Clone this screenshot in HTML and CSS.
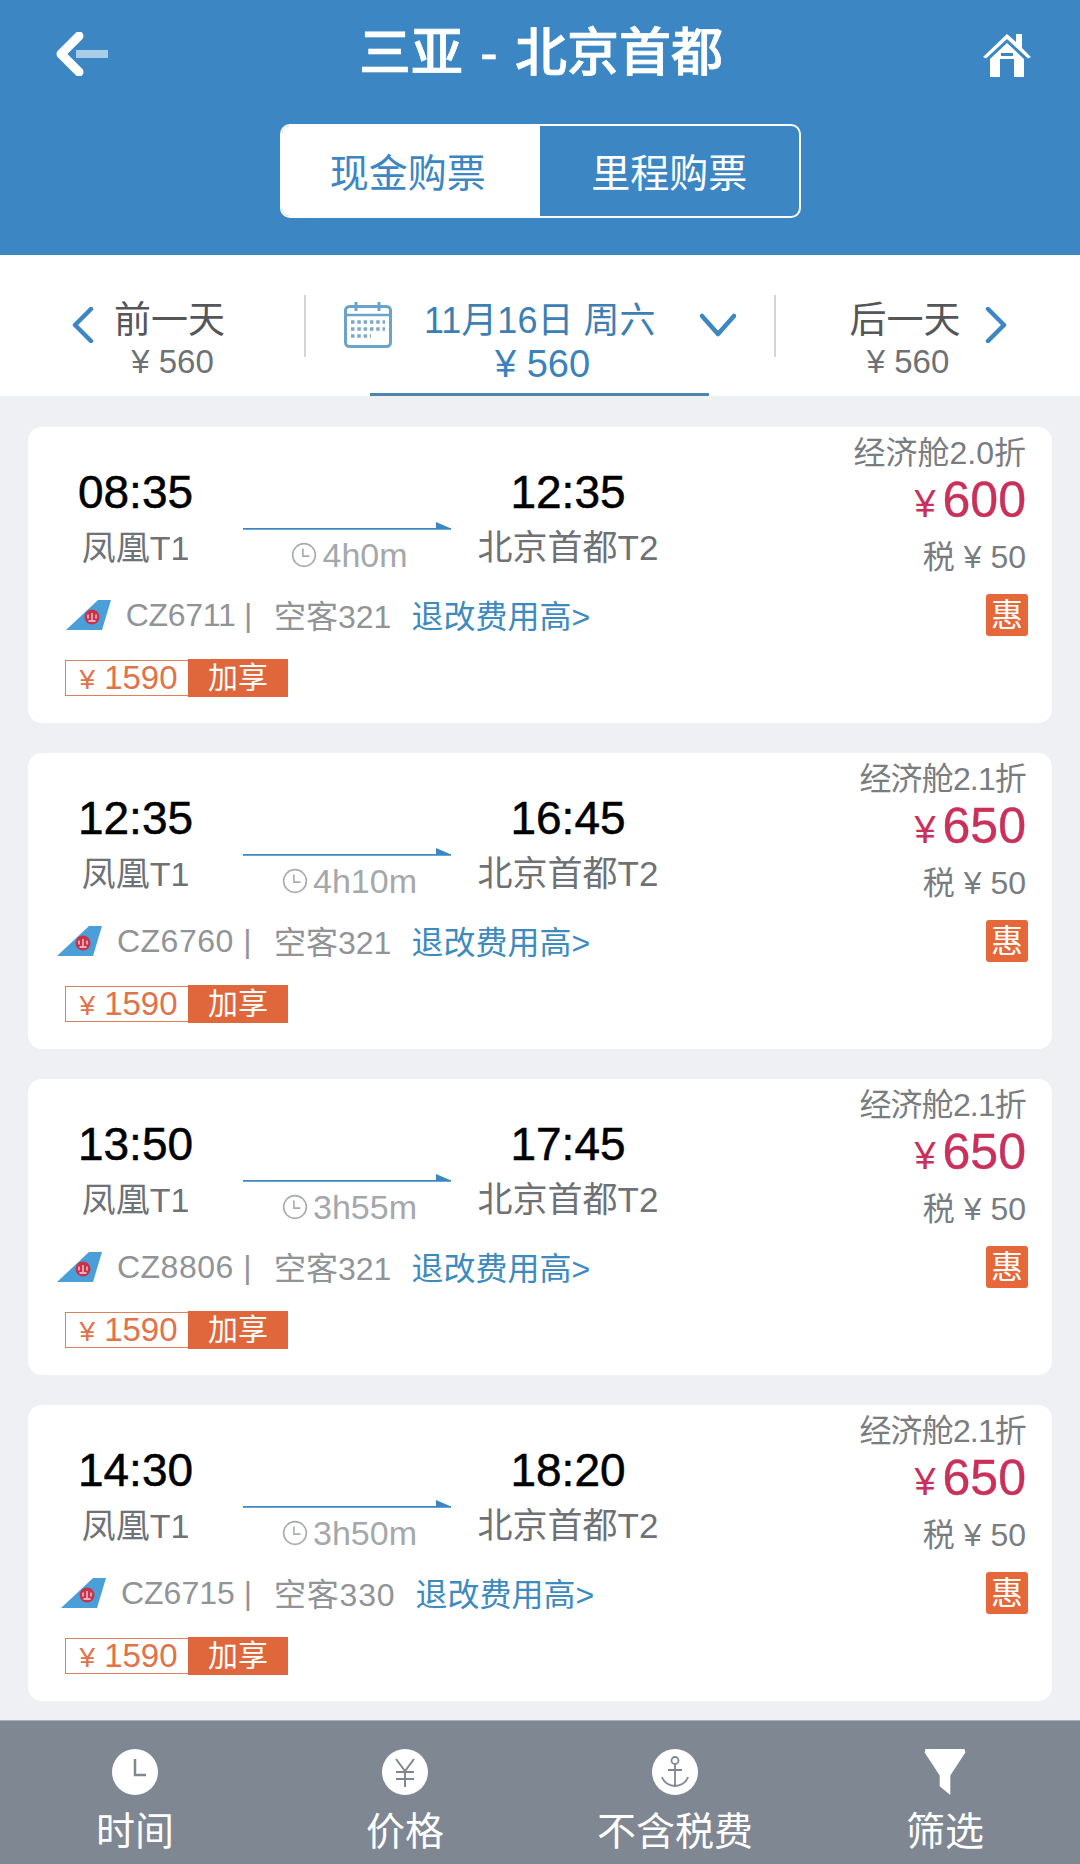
FILE: index.html
```html
<!DOCTYPE html>
<html lang="zh-CN">
<head>
<meta charset="utf-8">
<title>三亚 - 北京首都</title>
<link rel="stylesheet" href="styles.css">
</head>
<body>
<svg class="defs" width="0" height="0" aria-hidden="true">
  <symbol id="tail" viewBox="0 0 46 32">
    <path d="M1 31 33 1h13l-9 30z" fill="#4a9fd8"/>
    <circle cx="27" cy="18" r="7.500" fill="#c8324a"/>
    <path d="M23 15.500v4M27 14v7M31 15.500v4M23.500 22h7" stroke="#f3d7dc" stroke-width="1.300" fill="none"/>
  </symbol>
  <symbol id="clock" viewBox="0 0 24 24">
    <circle cx="12" cy="12" r="10.500" fill="none" stroke="#a9acaf" stroke-width="1.500"/>
    <path d="M11 6v7h6" fill="none" stroke="#a9acaf" stroke-width="1.500"/>
  </symbol>
  <symbol id="route" viewBox="0 0 208 8" preserveAspectRatio="none">
    <path d="M0 6h208v1.800H0z" fill="#3d86c4"/>
    <path d="M193 0l15 6.500h-15z" fill="#3d86c4"/>
  </symbol>
</svg>
<main class="page">
  <header class="header">
    <div class="title-row">
      <svg class="back" viewBox="0 0 52 44" aria-hidden="true">
        <path d="M20 22h32" stroke="#a8cde6" stroke-width="8" fill="none"/>
        <path d="M23 4 5 22l18 18" stroke="#fff" stroke-width="9" stroke-linecap="round" stroke-linejoin="round" fill="none"/>
      </svg>
      <h1 class="title">三亚 - 北京首都</h1>
      <svg class="home" viewBox="0 0 50 46" aria-hidden="true">
        <path d="M1 25 25 2l9 8V2h6v14l9 9-3 1.500L25 7 4 26.500z" fill="#fff"/>
        <path d="M8 27 25 11l17 16v18H32V27H18v18H8z" fill="#fff"/>
        <path d="M19 21h12v3H19z" fill="#3d86c4"/>
      </svg>
    </div>
    <div class="toggle">
      <div class="toggle-item is-active">现金购票</div>
      <div class="toggle-item">里程购票</div>
    </div>
  </header>

  <nav class="datebar">
    <div class="day-side day-prev">
      <svg class="chev" viewBox="0 0 22 36" aria-hidden="true"><path d="M19 2 3 18l16 16" /></svg>
      <div class="day-text"><div class="day-name">前一天</div><div class="day-price">¥ 560</div></div>
    </div>
    <div class="day-current">
      <svg class="cal" viewBox="0 0 48 46" aria-hidden="true">
        <rect x="1.500" y="4.500" width="45" height="40" rx="4" fill="none" stroke="#6ca3cb" stroke-width="3"/>
        <path d="M2 13h44" stroke="#6ca3cb" stroke-width="2.500"/>
        <path d="M12 0v9M35 0v9" stroke="#6ca3cb" stroke-width="3"/>
        <path d="M7 20h34M7 27h34M7 34h20" stroke="#7fa9c9" stroke-width="3.500" stroke-dasharray="3.500 2.800" fill="none"/>
      </svg>
      <div class="cur-text"><div class="cur-date">11月16日 周六</div><div class="cur-price">¥ 560</div></div>
      <svg class="chev-down" viewBox="0 0 36 24" aria-hidden="true"><path d="M2 3l16 18L34 3" /></svg>
    </div>
    <div class="day-side day-next">
      <div class="day-text"><div class="day-name">后一天</div><div class="day-price">¥ 560</div></div>
      <svg class="chev" viewBox="0 0 22 36" aria-hidden="true"><path d="M3 2l16 16L3 34" /></svg>
    </div>
  </nav>

  <section class="list">
    <article class="card">
      <div class="col-time"><div class="time">08:35</div><div class="station">凤凰T1</div></div>
      <div class="col-route">
        <svg class="route-line" aria-hidden="true"><use href="#route"/></svg>
        <div class="duration"><svg class="clock" aria-hidden="true"><use href="#clock"/></svg>4h0m</div>
      </div>
      <div class="col-time"><div class="time">12:35</div><div class="station dest">北京首都T2</div></div>
      <div class="col-price">
        <div class="cabin">经济舱2.0折</div>
        <div class="price"><span class="yen">¥</span>600</div>
        <div class="tax">税 ¥ 50</div>
      </div>
      <div class="flight">
        <div class="flight-id"><svg class="tail" aria-hidden="true"><use href="#tail"/></svg><span class="code narrow">CZ6711 |</span></div>
        <span class="plane">空客321</span><span class="rule">退改费用高&gt;</span>
      </div>
      <div class="badge">惠</div>
      <div class="tag"><span class="tag-price"><span class="tag-yen">¥</span> 1590</span><span class="tag-label">加享</span></div>
    </article>

    <article class="card">
      <div class="col-time"><div class="time">12:35</div><div class="station">凤凰T1</div></div>
      <div class="col-route">
        <svg class="route-line" aria-hidden="true"><use href="#route"/></svg>
        <div class="duration"><svg class="clock" aria-hidden="true"><use href="#clock"/></svg>4h10m</div>
      </div>
      <div class="col-time"><div class="time">16:45</div><div class="station dest">北京首都T2</div></div>
      <div class="col-price">
        <div class="cabin tight">经济舱2.1折</div>
        <div class="price"><span class="yen">¥</span>650</div>
        <div class="tax">税 ¥ 50</div>
      </div>
      <div class="flight">
        <div class="flight-id"><svg class="tail" aria-hidden="true"><use href="#tail"/></svg><span class="code">CZ6760 |</span></div>
        <span class="plane">空客321</span><span class="rule">退改费用高&gt;</span>
      </div>
      <div class="badge">惠</div>
      <div class="tag"><span class="tag-price"><span class="tag-yen">¥</span> 1590</span><span class="tag-label">加享</span></div>
    </article>

    <article class="card">
      <div class="col-time"><div class="time">13:50</div><div class="station">凤凰T1</div></div>
      <div class="col-route">
        <svg class="route-line" aria-hidden="true"><use href="#route"/></svg>
        <div class="duration"><svg class="clock" aria-hidden="true"><use href="#clock"/></svg>3h55m</div>
      </div>
      <div class="col-time"><div class="time">17:45</div><div class="station dest">北京首都T2</div></div>
      <div class="col-price">
        <div class="cabin tight">经济舱2.1折</div>
        <div class="price"><span class="yen">¥</span>650</div>
        <div class="tax">税 ¥ 50</div>
      </div>
      <div class="flight">
        <div class="flight-id"><svg class="tail" aria-hidden="true"><use href="#tail"/></svg><span class="code">CZ8806 |</span></div>
        <span class="plane">空客321</span><span class="rule">退改费用高&gt;</span>
      </div>
      <div class="badge">惠</div>
      <div class="tag"><span class="tag-price"><span class="tag-yen">¥</span> 1590</span><span class="tag-label">加享</span></div>
    </article>

    <article class="card">
      <div class="col-time"><div class="time">14:30</div><div class="station">凤凰T1</div></div>
      <div class="col-route">
        <svg class="route-line" aria-hidden="true"><use href="#route"/></svg>
        <div class="duration"><svg class="clock" aria-hidden="true"><use href="#clock"/></svg>3h50m</div>
      </div>
      <div class="col-time"><div class="time">18:20</div><div class="station dest">北京首都T2</div></div>
      <div class="col-price">
        <div class="cabin tight">经济舱2.1折</div>
        <div class="price"><span class="yen">¥</span>650</div>
        <div class="tax">税 ¥ 50</div>
      </div>
      <div class="flight">
        <div class="flight-id"><svg class="tail" aria-hidden="true"><use href="#tail"/></svg><span class="code semi-narrow">CZ6715 |</span></div>
        <span class="plane wide">空客330</span><span class="rule">退改费用高&gt;</span>
      </div>
      <div class="badge">惠</div>
      <div class="tag"><span class="tag-price"><span class="tag-yen">¥</span> 1590</span><span class="tag-label">加享</span></div>
    </article>
  </section>

  <footer class="tabs">
    <div class="tab">
      <svg class="tab-icon" viewBox="0 0 46 46" aria-hidden="true">
        <circle cx="23" cy="23" r="23" fill="#fff"/>
        <path d="M23 10v16h11" fill="none" stroke="#7f8792" stroke-width="2.500"/>
      </svg>
      <div class="tab-label">时间</div>
    </div>
    <div class="tab">
      <svg class="tab-icon" viewBox="0 0 46 46" aria-hidden="true">
        <circle cx="23" cy="23" r="23" fill="#fff"/>
        <path d="M14 10l9 12 9-12M23 22v16M14 23h18M14 30h18" fill="none" stroke="#7f8792" stroke-width="2"/>
      </svg>
      <div class="tab-label">价格</div>
    </div>
    <div class="tab">
      <svg class="tab-icon" viewBox="0 0 46 46" aria-hidden="true">
        <circle cx="23" cy="23" r="23" fill="#fff"/>
        <circle cx="23" cy="11.500" r="3.500" fill="none" stroke="#7f8792" stroke-width="1.800"/>
        <path d="M23 15v22M16 21h14M10 28c2 6 8 9 13 9s11-3 13-9" fill="none" stroke="#7f8792" stroke-width="1.800"/>
      </svg>
      <div class="tab-label">不含税费</div>
    </div>
    <div class="tab">
      <svg class="tab-icon" viewBox="0 0 46 52" aria-hidden="true">
        <path d="M1 0h44l1 4-17 26v22l-12-10V30L0 4z" fill="#fff"/>
      </svg>
      <div class="tab-label">筛选</div>
    </div>
  </footer>
</main>
</body>
</html>
```
FILE: styles.css
```css
* { box-sizing: border-box; }
html, body { margin: 0; padding: 0; }
body {
  width: 1080px;
  height: 1864px;
  overflow: hidden;
  font-family: "Liberation Sans", "Noto Sans CJK SC", sans-serif;
  background: #eef0f3;
}
.defs { position: absolute; }
.page { display: flex; flex-direction: column; height: 1864px; }

/* header */
.header { height: 255px; background: #3d86c4; flex: none; display: flex; flex-direction: column; align-items: center; }
.title-row { width: 100%; height: 124px; display: flex; align-items: flex-start; justify-content: space-between; padding: 32px 48px 0 56px; }
.back { width: 52px; height: 44px; }
.title { margin: -17px 8px 0 0; font-size: 52px; line-height: 76px; font-weight: 500; color: #fff; white-space: nowrap; -webkit-text-stroke: 0.7px #fff; word-spacing: 3px; }
.home { width: 50px; height: 46px; }
.toggle { width: 521px; height: 94px; display: flex; border: 2px solid #fff; border-radius: 10px; overflow: hidden; }
.toggle-item { flex: 0 0 50%; display: flex; align-items: center; justify-content: center; font-size: 39px; color: #fff; padding-bottom: 2px; }
.toggle-item.is-active { background: #fff; color: #3d86c4; padding-right: 6px; }

/* date bar */
.datebar { height: 141px; flex: none; background: #fff; display: grid; grid-template-columns: 304px 472px 304px; }
.day-side { display: flex; align-items: flex-start; justify-content: center; gap: 20px; padding-top: 41px; }
.day-prev { padding-right: 7px; }
.day-next { gap: 24px; }
.day-side .chev { margin-top: 11px; }
.chev { width: 22px; height: 36px; }
.chev path, .chev-down path { fill: none; stroke: #3d86c4; stroke-width: 4.500; stroke-linecap: round; stroke-linejoin: round; }
.day-text { text-align: center; }
.day-name { font-size: 37px; line-height: 50px; color: #555659; }
.day-price { font-size: 33px; line-height: 38px; margin-top: -3px; padding-left: 6px; color: #6e7175; }
.day-current {
  position: relative;
  display: flex;
  align-items: flex-start;
  padding-top: 41px;
  background:
    linear-gradient(#d3d6d9, #d3d6d9) left 40px / 2px 62px no-repeat,
    linear-gradient(#d3d6d9, #d3d6d9) right 40px / 2px 62px no-repeat;
}
.day-current::after { content: ""; position: absolute; left: 66px; bottom: 0; width: 339px; height: 3px; background: #4d84b0; }
.cal { width: 48px; height: 46px; margin: 6px 0 0 40px; flex: none; }
.cur-text { width: 230px; margin-left: 32px; text-align: center; flex: none; }
.cur-date { font-size: 36px; line-height: 50px; color: #3d7fb5; white-space: nowrap; }
.cur-price { font-size: 38px; line-height: 44px; margin-top: -4px; padding-left: 7px; color: #3b82bd; }
.chev-down { width: 36px; height: 24px; margin: 17px 0 0 46px; flex: none; }

/* list */
.list { flex: 1; display: flex; flex-direction: column; gap: 30px; padding: 31px 28px 0; }
.card {
  height: 296px;
  flex: none;
  background: #fff;
  border-radius: 14px;
  display: grid;
  grid-template-columns: 215px 208px 234px 1fr;
  grid-template-rows: 152px 42px 38px;
  row-gap: 7px;
  padding: 8px 26px 0 0;
}
.card .tag { margin-top: 16px; }
.col-time { padding-top: 31px; text-align: center; }
.time { font-size: 46px; line-height: 52px; color: #000; -webkit-text-stroke: 0.5px #000; }
.station { font-size: 34px; line-height: 40px; margin-top: 10px; color: #6e7175; white-space: nowrap; }
.station.dest { font-size: 35px; }
.col-route { padding-top: 87px; display: flex; flex-direction: column; align-items: center; }
.route-line { display: block; width: 208px; height: 8px; }
.duration { display: flex; align-items: center; gap: 5px; margin-top: 5px; padding-left: 5px; height: 40px; font-size: 34px; color: #a5a8ab; }
.clock { width: 26px; height: 26px; }
.col-price { text-align: right; display: flex; flex-direction: column; align-items: flex-end; white-space: nowrap; }
.cabin { font-size: 32px; line-height: 36px; color: #7a7d80; }
.cabin.tight { letter-spacing: -0.850px; }
.price { font-size: 50px; line-height: 56px; margin-top: 1px; color: #c9305a; -webkit-text-stroke: 0.4px #c9305a; }
.yen { font-size: 38px; margin-right: 7px; -webkit-text-stroke: 0; }
.tax { font-size: 32px; line-height: 40px; margin-top: 5px; color: #7a7d80; }
.flight { grid-column: 1 / 4; display: flex; align-items: center; font-size: 32px; white-space: nowrap; }
.flight-id { width: 224px; flex: none; display: flex; align-items: center; justify-content: flex-end; }
.tail { width: 46px; height: 32px; margin-right: 15px; flex: none; }
.code { color: #919497; letter-spacing: 0.500px; }
.code.narrow { letter-spacing: -0.300px; }
.code.semi-narrow { letter-spacing: 0; }
.plane { margin: -2px 0 0 22px; color: #919497; }
.plane.wide { letter-spacing: 0.800px; }
.rule { margin: -2px 0 0 20px; color: #3d8abf; }
.badge {
  width: 42px; height: 42px;
  justify-self: end;
  margin-right: -2px;
  background: #e5673a;
  border-radius: 3px;
  color: #fff;
  font-size: 32px;
  line-height: 42px;
  text-align: center;
}
.tag { grid-column: 1 / 4; display: flex; align-items: stretch; height: 38px; margin-left: 37px; width: 223px; }
.tag-price { width: 123px; height: 36px; margin-top: 1px; padding-left: 3px; border: 1.500px solid #e0805a; border-right: 0; color: #e0734a; font-size: 33px; line-height: 33px; text-align: center; white-space: nowrap; }
.tag-yen { font-size: 28px; }
.tag-label { width: 100px; background: #e0673c; color: #fff; font-size: 30px; line-height: 38px; text-align: center; }

/* tabs */
.tabs { height: 144px; flex: none; background: #7f8792; display: grid; grid-template-columns: repeat(4, 270px); border-top: 1px solid #aab0b8; }
.tab { display: flex; flex-direction: column; align-items: center; padding-top: 28px; }
.tab-icon { width: 46px; height: 46px; overflow: visible; }
.tab-label { font-size: 39px; line-height: 50px; margin-top: 12px; color: #fff; white-space: nowrap; }
```
